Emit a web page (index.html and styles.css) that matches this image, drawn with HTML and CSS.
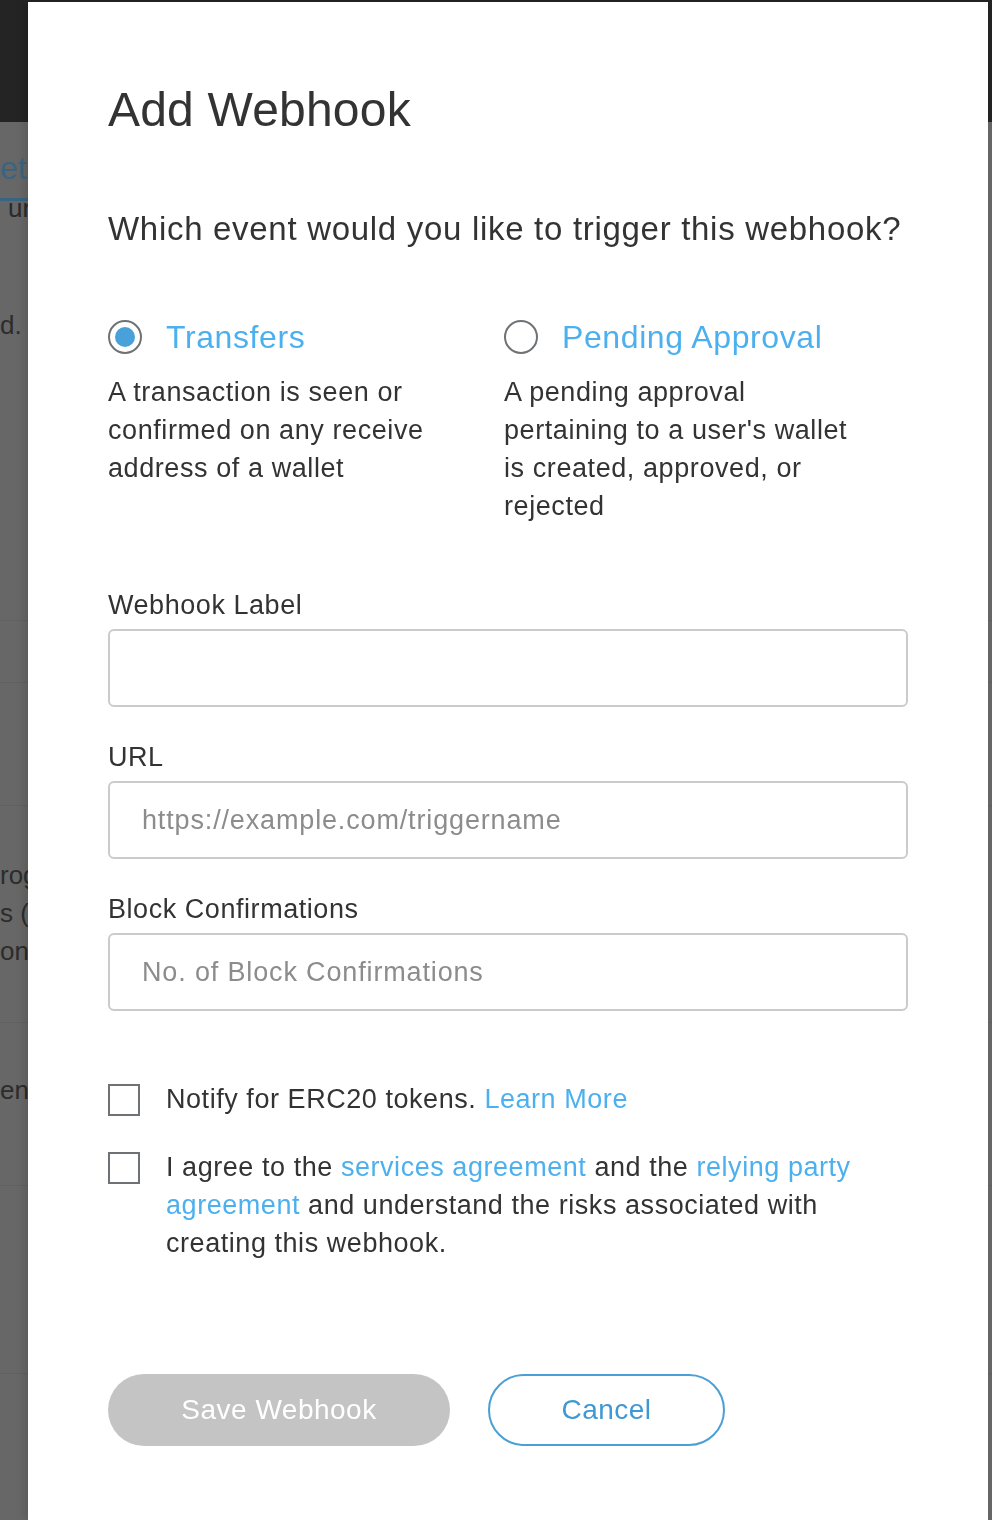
FILE: index.html
```html
<!DOCTYPE html>
<html lang="en">
<head>
<meta charset="utf-8">
<title>Add Webhook</title>
<link rel="stylesheet" href="styles.css">
</head>
<body>
<div class="bg">
  <div class="bg-header"></div>
  <div class="bg-body">
    <div class="bg-tab">et</div>
    <div class="bg-tabline"></div>
    <div class="bg-sub">ur</div>
    <div class="bg-text bg-d">d.</div>
    <div class="bg-sep bg-sep1"></div>
    <div class="bg-sep bg-sep2"></div>
    <div class="bg-sep bg-sep3"></div>
    <div class="bg-para">rog<br>s (A<br>on.</div>
    <div class="bg-sep bg-sep4"></div>
    <div class="bg-text bg-en">en</div>
    <div class="bg-sep bg-sep5"></div>
    <div class="bg-sep bg-sep6"></div>
  </div>
</div>

<div class="modal">
  <h1 class="title">Add Webhook</h1>
  <p class="question">Which event would you like to trigger this webhook?</p>

  <div class="events">
    <div class="event">
      <div class="event-head">
        <span class="radio radio-on"></span>
        <span class="event-name">Transfers</span>
      </div>
      <p class="event-desc">A transaction is seen or confirmed on any receive address of a wallet</p>
    </div>
    <div class="event">
      <div class="event-head">
        <span class="radio"></span>
        <span class="event-name">Pending Approval</span>
      </div>
      <p class="event-desc">A pending approval pertaining to a user's wallet is created, approved, or rejected</p>
    </div>
  </div>

  <label class="field-label field-first">Webhook Label</label>
  <input class="field" type="text">

  <label class="field-label">URL</label>
  <input class="field" type="text" placeholder="https://example.com/triggername">

  <label class="field-label">Block Confirmations</label>
  <input class="field" type="text" placeholder="No. of Block Confirmations">

  <div class="check-row check-first">
    <span class="checkbox"></span>
    <p class="check-text">Notify for ERC20 tokens. <a class="link">Learn More</a></p>
  </div>
  <div class="check-row check-second">
    <span class="checkbox"></span>
    <p class="check-text">I agree to the <a class="link">services agreement</a> and the <a class="link">relying party agreement</a> and understand the risks associated with creating this webhook.</p>
  </div>

  <div class="actions">
    <button class="btn btn-save" type="button">Save Webhook</button>
    <button class="btn btn-cancel" type="button">Cancel</button>
  </div>
</div>
</body>
</html>
```

FILE: styles.css
```css
html, body {
  margin: 0;
  padding: 0;
  height: 100%;
}

body {
  background: #676767;
  font-family: "Liberation Sans", Arial, Helvetica, sans-serif;
  overflow: hidden;
  color: #333;
}

/* ---------- dimmed background page ---------- */
.bg {
  width: 100%;
}

.bg-header {
  height: 122px;
  background: #242424;
}

.bg-body {
  font-size: 26px;
  color: #2c2c2c;
  white-space: nowrap;
}

.bg-tab {
  margin-top: 28px;
  height: 36px;
  line-height: 36px;
  font-size: 32px;
  color: #3a6480;
}

.bg-tabline {
  margin-top: 12px;
  width: 28px;
  height: 3px;
  background: #3a6480;
}

.bg-sub {
  margin-top: -8px;
  padding-left: 8px;
  line-height: 30px;
  font-size: 26px;
  color: #2a2a2a;
}

.bg-text {
  line-height: 38px;
}

.bg-d {
  margin-top: 83px;
}

.bg-sep {
  height: 1px;
  background: #606060;
}

.bg-sep1 { margin-top: 276px; }
.bg-sep2 { margin-top: 61px; }
.bg-sep3 { margin-top: 122px; }

.bg-para {
  margin-top: 50px;
  line-height: 38px;
}

.bg-sep4 { margin-top: 52px; }

.bg-en {
  margin-top: 48px;
}

.bg-sep5 { margin-top: 76px; }
.bg-sep6 { margin-top: 187px; }

/* ---------- modal ---------- */
.modal {
  position: fixed;
  top: 2px;
  left: 28px;
  bottom: 0;
  width: 960px;
  box-sizing: border-box;
  background: #fff;
  padding: 80px 80px 0 80px;
  box-shadow: -4px 0 8px rgba(0, 0, 0, 0.12);
}

.title {
  margin: 0;
  font-size: 48px;
  line-height: 56px;
  font-weight: normal;
  letter-spacing: 0.2px;
  color: #333;
}

.question {
  margin: 71px 0 0 0;
  font-size: 33px;
  line-height: 40px;
  letter-spacing: 0.7px;
  color: #333;
}

.events {
  display: flex;
  gap: 40px;
  margin-top: 68px;
}

.event {
  width: 356px;
}

.event-head {
  display: flex;
  align-items: center;
  height: 40px;
  gap: 24px;
}

.radio {
  box-sizing: border-box;
  width: 34px;
  height: 34px;
  border: 2px solid #6f7275;
  border-radius: 50%;
  flex: none;
  display: flex;
  align-items: center;
  justify-content: center;
}

.radio-on::after {
  content: "";
  width: 20px;
  height: 20px;
  border-radius: 50%;
  background: #48a1d8;
}

.event-name {
  font-size: 32px;
  line-height: 40px;
  letter-spacing: 0.6px;
  color: #4db0ee;
}

.event-desc {
  margin: 16px 0 0 0;
  font-size: 27px;
  line-height: 38px;
  letter-spacing: 0.58px;
  color: #333;
}

.field-label {
  display: block;
  margin-top: 34px;
  font-size: 27px;
  line-height: 32px;
  letter-spacing: 0.55px;
  color: #333;
}

.field-first {
  margin-top: 64px;
}

.field {
  display: block;
  box-sizing: border-box;
  width: 800px;
  height: 78px;
  margin-top: 8px;
  padding: 0 32px;
  border: 2px solid #cbcbcb;
  border-radius: 6px;
  font-family: inherit;
  font-size: 27px;
  letter-spacing: 0.85px;
  color: #333;
  background: #fff;
  outline: none;
}

.field::placeholder {
  color: #8c8c8c;
}

.check-row {
  display: flex;
  align-items: flex-start;
  gap: 26px;
}

.check-first {
  margin-top: 69px;
}

.check-second {
  margin-top: 30px;
}

.checkbox {
  box-sizing: border-box;
  flex: none;
  width: 32px;
  height: 32px;
  margin-top: 4px;
  border: 2px solid #6f7275;
}

.check-text {
  margin: 0;
  width: 742px;
  font-size: 27px;
  line-height: 38px;
  letter-spacing: 0.55px;
  color: #333;
}

.link {
  color: #4db0ee;
  text-decoration: none;
}

.actions {
  display: flex;
  gap: 38px;
  margin-top: 112px;
}

.btn {
  box-sizing: border-box;
  height: 72px;
  border-radius: 36px;
  font-family: inherit;
  font-size: 28px;
  letter-spacing: 0.5px;
  padding: 0;
  cursor: pointer;
}

.btn-save {
  width: 342px;
  background: #c4c4c4;
  border: none;
  color: #fff;
}

.btn-cancel {
  width: 237px;
  background: #fff;
  border: 2px solid #4a9fd6;
  color: #3f98d3;
}
```
